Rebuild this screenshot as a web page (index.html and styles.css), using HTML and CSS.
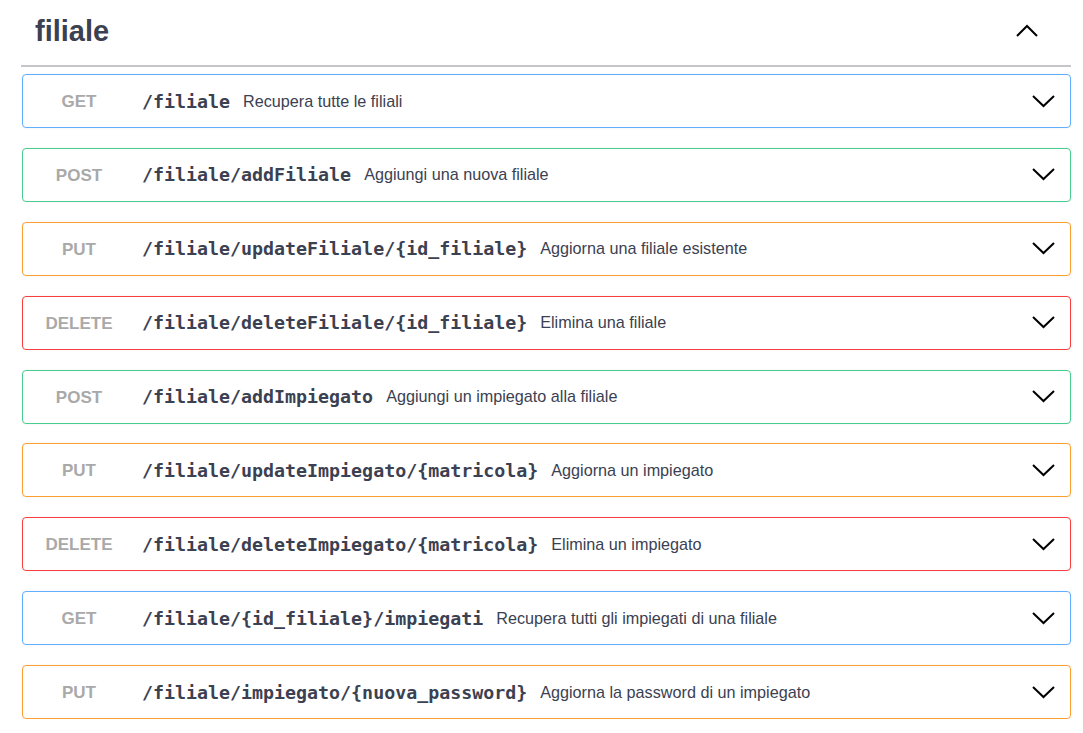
FILE: index.html
```html
<!DOCTYPE html>
<html lang="it">
<head>
<meta charset="utf-8">
<title>filiale</title>
<link rel="stylesheet" href="styles.css">
</head>
<body>
<div class="tag-section">
  <div class="tag-header">
    <h3 class="tag-title">filiale</h3>
    <svg class="tag-arrow" width="22" height="13" viewBox="0 0 22 13"><polyline points="1,12 11,2 21,12" fill="none" stroke="#000" stroke-width="2"/></svg>
  </div>
  <div class="ops">
    <div class="op get"><span class="method">GET</span><span class="path">/filiale</span><span class="desc">Recupera tutte le filiali</span><svg class="arrow" width="23" height="13" viewBox="0 0 23 13"><polyline points="1,1 11.5,11 22,1" fill="none" stroke="#000" stroke-width="2"/></svg></div>
    <div class="op post"><span class="method">POST</span><span class="path">/filiale/addFiliale</span><span class="desc">Aggiungi una nuova filiale</span><svg class="arrow" width="23" height="13" viewBox="0 0 23 13"><polyline points="1,1 11.5,11 22,1" fill="none" stroke="#000" stroke-width="2"/></svg></div>
    <div class="op put"><span class="method">PUT</span><span class="path">/filiale/updateFiliale/{id_filiale}</span><span class="desc">Aggiorna una filiale esistente</span><svg class="arrow" width="23" height="13" viewBox="0 0 23 13"><polyline points="1,1 11.5,11 22,1" fill="none" stroke="#000" stroke-width="2"/></svg></div>
    <div class="op delete"><span class="method">DELETE</span><span class="path">/filiale/deleteFiliale/{id_filiale}</span><span class="desc">Elimina una filiale</span><svg class="arrow" width="23" height="13" viewBox="0 0 23 13"><polyline points="1,1 11.5,11 22,1" fill="none" stroke="#000" stroke-width="2"/></svg></div>
    <div class="op post"><span class="method">POST</span><span class="path">/filiale/addImpiegato</span><span class="desc">Aggiungi un impiegato alla filiale</span><svg class="arrow" width="23" height="13" viewBox="0 0 23 13"><polyline points="1,1 11.5,11 22,1" fill="none" stroke="#000" stroke-width="2"/></svg></div>
    <div class="op put"><span class="method">PUT</span><span class="path">/filiale/updateImpiegato/{matricola}</span><span class="desc">Aggiorna un impiegato</span><svg class="arrow" width="23" height="13" viewBox="0 0 23 13"><polyline points="1,1 11.5,11 22,1" fill="none" stroke="#000" stroke-width="2"/></svg></div>
    <div class="op delete"><span class="method">DELETE</span><span class="path">/filiale/deleteImpiegato/{matricola}</span><span class="desc">Elimina un impiegato</span><svg class="arrow" width="23" height="13" viewBox="0 0 23 13"><polyline points="1,1 11.5,11 22,1" fill="none" stroke="#000" stroke-width="2"/></svg></div>
    <div class="op get"><span class="method">GET</span><span class="path">/filiale/{id_filiale}/impiegati</span><span class="desc">Recupera tutti gli impiegati di una filiale</span><svg class="arrow" width="23" height="13" viewBox="0 0 23 13"><polyline points="1,1 11.5,11 22,1" fill="none" stroke="#000" stroke-width="2"/></svg></div>
    <div class="op put"><span class="method">PUT</span><span class="path">/filiale/impiegato/{nuova_password}</span><span class="desc">Aggiorna la password di un impiegato</span><svg class="arrow" width="23" height="13" viewBox="0 0 23 13"><polyline points="1,1 11.5,11 22,1" fill="none" stroke="#000" stroke-width="2"/></svg></div>
  </div>
</div>
</body>
</html>
```
FILE: styles.css
```css
html, body {
  margin: 0;
  padding: 0;
  background: #fff;
}
body {
  font-family: "Liberation Sans", Arial, sans-serif;
  color: #3b4151;
}
.tag-section {
  width: 1050px;
  margin-left: 21px;
}
.tag-header {
  display: flex;
  align-items: center;
  justify-content: space-between;
  height: 65px;
  border-bottom: 2px solid #c5c6ca;
  padding: 0 33px 0 14px;
}
.tag-title {
  margin: 0;
  font-size: 29px;
  font-weight: bold;
  color: #3b4151;
  line-height: 1;
  position: relative;
  top: -1px;
}
.tag-arrow {
  display: block;
  margin-top: -4px;
}
.ops {
  padding-top: 7px;
  display: flex;
  flex-direction: column;
  gap: 19.875px;
  padding-left: 1px;
}
.op {
  box-sizing: border-box;
  height: 54px;
  border: 1px solid #61affe;
  border-radius: 4px;
  display: flex;
  align-items: center;
  padding-left: 6px;
  padding-right: 15px;
  box-shadow: 0 0 2px rgba(0,0,0,.08);
}
.op.get { border-color: #61affe; }
.op.post { border-color: #49cc90; }
.op.put { border-color: #fca130; }
.op.delete { border-color: #f93e3e; }
.method {
  width: 100px;
  text-align: center;
  font-size: 17px;
  font-weight: bold;
  color: #a9a9a9;
  padding-top: 2px;
}
.path {
  margin-left: 13px;
  font-family: "DejaVu Sans Mono", "Liberation Mono", monospace;
  font-weight: bold;
  font-size: 18.3px;
  color: #3b4151;
}
.desc {
  margin-left: 13px;
  font-size: 16.2px;
  color: #3b4151;
  flex: 1;
}
.arrow {
  display: block;
}
```
